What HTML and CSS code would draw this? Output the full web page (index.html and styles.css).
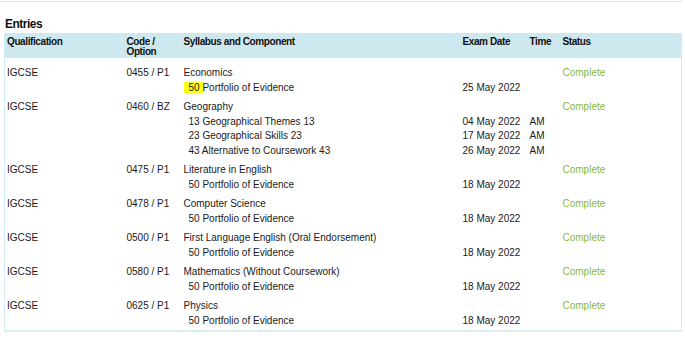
FILE: index.html
```html
<!DOCTYPE html>
<html>
<head>
<meta charset="utf-8">
<link rel="stylesheet" href="styles.css">
</head>
<body>
<div class="prev-box"></div>
<h2 class="title">Entries</h2>
<table class="entries">
  <colgroup>
    <col class="c-qual"><col class="c-code"><col class="c-syl"><col class="c-date"><col class="c-time"><col class="c-status">
  </colgroup>
  <thead>
    <tr>
      <th>Qualification</th>
      <th>Code /<br>Option</th>
      <th>Syllabus and Component</th>
      <th>Exam Date</th>
      <th>Time</th>
      <th>Status</th>
    </tr>
  </thead>
  <tbody>
    <tr class="first">
      <td>IGCSE</td>
      <td>0455 / P1</td>
      <td><div>Economics</div><div class="comp"><span class="hl">50 </span>Portfolio of Evidence</div></td>
      <td><div>&nbsp;</div><div>25 May 2022</div></td>
      <td></td>
      <td class="status">Complete</td>
    </tr>
    <tr>
      <td>IGCSE</td>
      <td>0460 / BZ</td>
      <td><div>Geography</div><div class="comp">13 Geographical Themes 13</div><div class="comp">23 Geographical Skills 23</div><div class="comp">43 Alternative to Coursework 43</div></td>
      <td><div>&nbsp;</div><div>04 May 2022</div><div>17 May 2022</div><div>26 May 2022</div></td>
      <td><div>&nbsp;</div><div>AM</div><div>AM</div><div>AM</div></td>
      <td class="status">Complete</td>
    </tr>
    <tr>
      <td>IGCSE</td>
      <td>0475 / P1</td>
      <td><div>Literature in English</div><div class="comp">50 Portfolio of Evidence</div></td>
      <td><div>&nbsp;</div><div>18 May 2022</div></td>
      <td></td>
      <td class="status">Complete</td>
    </tr>
    <tr>
      <td>IGCSE</td>
      <td>0478 / P1</td>
      <td><div>Computer Science</div><div class="comp">50 Portfolio of Evidence</div></td>
      <td><div>&nbsp;</div><div>18 May 2022</div></td>
      <td></td>
      <td class="status">Complete</td>
    </tr>
    <tr>
      <td>IGCSE</td>
      <td>0500 / P1</td>
      <td><div>First Language English (Oral Endorsement)</div><div class="comp">50 Portfolio of Evidence</div></td>
      <td><div>&nbsp;</div><div>18 May 2022</div></td>
      <td></td>
      <td class="status">Complete</td>
    </tr>
    <tr>
      <td>IGCSE</td>
      <td>0580 / P1</td>
      <td><div>Mathematics (Without Coursework)</div><div class="comp">50 Portfolio of Evidence</div></td>
      <td><div>&nbsp;</div><div>18 May 2022</div></td>
      <td></td>
      <td class="status">Complete</td>
    </tr>
    <tr class="last">
      <td>IGCSE</td>
      <td>0625 / P1</td>
      <td><div>Physics</div><div class="comp">50 Portfolio of Evidence</div></td>
      <td><div>&nbsp;</div><div>18 May 2022</div></td>
      <td></td>
      <td class="status">Complete</td>
    </tr>
  </tbody>
</table>
</body>
</html>
```

FILE: styles.css
```css
html, body {
  margin: 0;
  padding: 0;
  background: #ffffff;
}
body {
  font-family: "Liberation Sans", Arial, sans-serif;
  color: #1a1a1a;
  font-size: 10px;
  line-height: 14.75px;
}
.prev-box {
  width: 681px;
  height: 1px;
  border-bottom: 1px solid #d3ecf1;
  border-right: 1px solid #d3ecf1;
}
.title {
  margin: 13.5px 0 0 5px;
  font-size: 12px;
  line-height: 16px;
  font-weight: bold;
  letter-spacing: -0.5px;
  color: #111;
}
.entries {
  margin: 1.5px 0 0 4px;
  width: 678px;
  border-collapse: collapse;
  table-layout: fixed;
  border-left: 1px solid #d3ecf1;
  border-right: 1px solid #d3ecf1;
  border-bottom: 2px solid #d9eff3;
}
.c-qual { width: 119px; }
.c-code { width: 57px; }
.c-syl { width: 279px; }
.c-date { width: 67px; }
.c-time { width: 33px; }
.c-status { width: auto; }
.entries thead tr {
  background: #cde8ee;
}
.entries th {
  text-align: left;
  vertical-align: top;
  font-weight: bold;
  font-size: 10px;
  line-height: 10px;
  letter-spacing: -0.4px;
  color: #111;
  padding: 3.5px 3px 1.5px 3px;
}
.entries th:first-child { padding-left: 2px; }
.entries td {
  vertical-align: top;
  padding: 2px 3px 2.4px 3px;
  white-space: nowrap;
}
.entries td:first-child { padding-left: 2px; }
.entries tr.first td { padding-top: 8px; }
.entries tr.last td { padding-bottom: 1.5px; }
.comp {
  padding-left: 5px;
}
.hl {
  background: #ffff1a;
  margin-left: -5px;
  padding-left: 5px;
  padding-right: 2px;
  margin-right: -2px;
}
.status {
  color: #86b83e;
}
```
